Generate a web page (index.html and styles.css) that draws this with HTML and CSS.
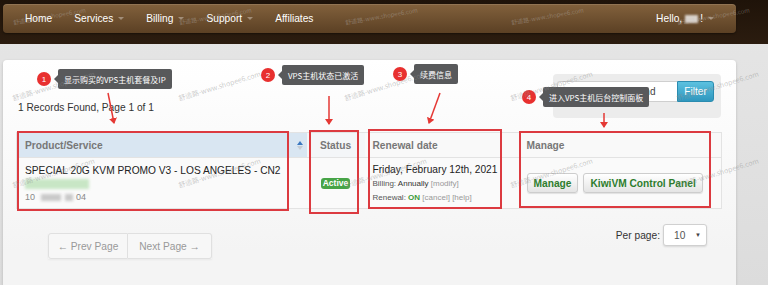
FILE: index.html
```html
<!DOCTYPE html>
<html lang="zh-CN">
<head>
<meta charset="utf-8">
<title>My Products &amp; Services</title>
<link rel="stylesheet" href="styles.css">
</head>
<body>
<header class="topbar">
  <nav class="navbar">
    <ul class="nav">
      <li class="nav-item">Home</li>
      <li class="nav-item">Services<span class="caret"></span></li>
      <li class="nav-item">Billing<span class="caret"></span></li>
      <li class="nav-item">Support<span class="caret"></span></li>
      <li class="nav-item">Affiliates</li>
    </ul>
    <div class="user">Hello, <span class="blur-name">xxx</span>!<span class="caret"></span></div>
  </nav>
</header>

<main class="wrap">
  <section class="panel">
    <div class="toolbar">
      <p class="count">1 Records Found, Page 1 of 1</p>
      <form class="filter">
        <input class="filter-input" type="text" placeholder="Enter Domain to Find">
        <button class="filter-btn" type="button">Filter</button>
      </form>
    </div>

    <table class="services">
      <thead>
        <tr>
          <th class="col-product">
            <div class="th-inner">
              <span>Product/Service</span>
              <span class="sort"><span class="sort-up"></span><span class="sort-down"></span></span>
            </div>
          </th>
          <th class="col-status">Status</th>
          <th class="col-renew">Renewal date</th>
          <th class="col-manage">Manage</th>
        </tr>
      </thead>
      <tbody>
        <tr>
          <td class="cell-product">
            <div class="line">SPECIAL 20G KVM PROMO V3 - LOS ANGELES - CN2</div>
            <div class="line"><span class="blob blob-green"></span></div>
            <div class="line ip">10<span class="blob blob-gray"></span><span class="blob blob-gray short"></span>04</div>
          </td>
          <td class="cell-status"><span class="label-active">Active</span></td>
          <td class="cell-renew">
            <div class="date">Friday, February 12th, 2021</div>
            <div class="small"><span class="muted">Billing:</span> Annually <span class="link">[modify]</span></div>
            <div class="small"><span class="muted">Renewal:</span> <span class="on">ON</span> <span class="link">[cancel]</span> <span class="link">[help]</span></div>
          </td>
          <td class="cell-manage">
            <div class="btns">
              <button class="btn" type="button">Manage</button>
              <button class="btn" type="button">KiwiVM Control Panel</button>
            </div>
          </td>
        </tr>
      </tbody>
    </table>

    <div class="footer">
      <div class="pager">
        <span class="page-btn prev">← Prev Page</span>
        <span class="page-btn next">Next Page →</span>
      </div>
      <div class="perpage">
        <span>Per page:</span>
        <span class="select"><span>10</span><span class="sel-arrow">▼</span></span>
      </div>
    </div>
  </section>
</main>

<div class="annotations">
  <div class="hl hl-1"></div>
  <div class="hl hl-2"></div>
  <div class="hl hl-3"></div>
  <div class="hl hl-4"></div>

  <svg class="arrows" width="768" height="285" viewBox="0 0 768 285">
    <defs>
      <marker id="ah" markerWidth="6" markerHeight="8" refX="5" refY="4" orient="auto" markerUnits="userSpaceOnUse">
        <path d="M0,0 L6,4 L0,8 Z" fill="#e53935"/>
      </marker>
    </defs>
    <line x1="108" y1="93" x2="114" y2="123" stroke="#e53935" stroke-width="1.5" marker-end="url(#ah)"/>
    <line x1="329" y1="96" x2="329" y2="124" stroke="#e53935" stroke-width="1.5" marker-end="url(#ah)"/>
    <line x1="440" y1="93" x2="429" y2="123" stroke="#e53935" stroke-width="1.5" marker-end="url(#ah)"/>
    <line x1="604" y1="113" x2="604" y2="127" stroke="#e53935" stroke-width="1.5" marker-end="url(#ah)"/>
  </svg>

  <div class="note note-1"><span class="num">1</span><span class="tip">显示购买的VPS主机套餐及IP</span></div>
  <div class="note note-2"><span class="num">2</span><span class="tip">VPS主机状态已激活</span></div>
  <div class="note note-3"><span class="num">3</span><span class="tip">续费信息</span></div>
  <div class="note note-4"><span class="num">4</span><span class="tip">进入VPS主机后台控制面板</span></div>
</div>

<div class="watermarks">
  <span class="wm wm-top">舒适路-www.shopee6.com</span><span class="wm wm-top">舒适路-www.shopee6.com</span><span class="wm wm-top">舒适路-www.shopee6.com</span><span class="wm wm-top">舒适路-www.shopee6.com</span><span class="wm wm-top">舒适路-www.shopee6.com</span>
  <span class="wm">舒适路-www.shopee6.com</span><span class="wm">舒适路-www.shopee6.com</span><span class="wm">舒适路-www.shopee6.com</span><span class="wm">舒适路-www.shopee6.com</span><span class="wm">舒适路-www.shopee6.com</span>
  <span class="wm">舒适路-www.shopee6.com</span><span class="wm">舒适路-www.shopee6.com</span><span class="wm">舒适路-www.shopee6.com</span><span class="wm">舒适路-www.shopee6.com</span><span class="wm">舒适路-www.shopee6.com</span>
</div>
</body>
</html>
```

FILE: styles.css
```css
* { box-sizing: border-box; }

html, body {
  margin: 0;
  height: 285px;
  overflow: hidden;
}

body {
  position: relative;
  background: linear-gradient(#e6e6e6, #dcdcdc);
  font-family: "Liberation Sans", Arial, "Noto Sans CJK SC", sans-serif;
  font-size: 10.2px;
  color: #333;
}

/* ---------- top navigation ---------- */
.topbar {
  height: 44px;
  padding: 4px 32px 0 3px;
  background: linear-gradient(#1f1309, #2b1c0f);
}

.navbar {
  height: 29px;
  border-radius: 4px;
  background: linear-gradient(#82613c, #5b4024);
  box-shadow: inset 0 1px 0 rgba(255, 255, 255, 0.12), 0 1px 2px rgba(0, 0, 0, 0.4);
  display: flex;
  align-items: center;
  justify-content: space-between;
  padding: 0 22px;
  color: #fff;
}

.nav {
  list-style: none;
  margin: 0;
  padding: 0;
  display: flex;
  gap: 22px;
}

.nav-item {
  display: flex;
  align-items: center;
}

.caret {
  display: inline-block;
  width: 0;
  height: 0;
  margin-left: 5px;
  border-left: 3px solid transparent;
  border-right: 3px solid transparent;
  border-top: 3px solid rgba(255, 255, 255, 0.35);
}

.user {
  display: flex;
  align-items: center;
}

.blur-name {
  display: inline-block;
  width: 13px;
  height: 8px;
  margin: 0 2px 0 3px;
  background: #d9d2cb;
  color: transparent;
  filter: blur(1px);
}

/* ---------- page ---------- */
.wrap {
  padding: 16px 32px 0 3px;
}

.panel {
  height: 225px;
  padding: 14px 15px 0 13px;
  border-radius: 4px 4px 0 0;
  background: linear-gradient(#ffffff, #f4f4f4 190px);
  box-shadow: 0 1px 3px rgba(0, 0, 0, 0.18);
}

.toolbar {
  height: 44px;
  margin-bottom: 14px;
  display: flex;
  justify-content: space-between;
  align-items: flex-end;
}

.count {
  margin: 0 0 4px 2px;
  line-height: 12px;
  color: #333;
}

.filter {
  width: 168px;
  height: 44px;
  margin: 0;
  padding: 7px 7px 0 4px;
  border-radius: 4px;
  background: #ececec;
  display: flex;
  align-items: flex-start;
}

.filter-input {
  width: 120px;
  height: 21px;
  margin: 0;
  padding: 0 3px;
  border: 1px solid #cfcfcf;
  border-right: none;
  border-radius: 3px 0 0 3px;
  background: #fff;
  font-family: "Liberation Sans", Arial, sans-serif;
  font-size: 10px;
  color: #444;
}

.filter-input::placeholder {
  color: #444;
}

.filter-btn {
  width: 37px;
  height: 21px;
  margin: 0;
  padding: 0;
  border: 1px solid #2b8cb0;
  border-radius: 0 3px 3px 0;
  background: linear-gradient(#5cc1e0, #2f97be);
  color: #fff;
  font-family: "Liberation Sans", Arial, sans-serif;
  font-size: 10.2px;
}

/* ---------- table ---------- */
.services {
  width: 705px;
  border-collapse: collapse;
  border: 1px solid #e3e3e3;
  table-layout: fixed;
}

.services th {
  height: 25px;
  padding: 0 8px;
  text-align: left;
  font-weight: bold;
  color: #777;
  background: #f9f9f9;
}

.services th.col-product { width: 290px; background: #d9e6f2; padding-right: 4px; }
.services th.col-status  { width: 58px; text-align: center; background: #f4f6f8; padding: 0; }
.services th.col-renew   { width: 154px; }
.services th.col-manage  { width: 203px; }

.th-inner {
  display: flex;
  justify-content: space-between;
  align-items: center;
}

.sort {
  display: flex;
  flex-direction: column;
  gap: 1px;
}

.sort-up {
  width: 0;
  height: 0;
  border-left: 3px solid transparent;
  border-right: 3px solid transparent;
  border-bottom: 4px solid #3b78c0;
}

.sort-down {
  width: 0;
  height: 0;
  border-left: 3px solid transparent;
  border-right: 3px solid transparent;
  border-top: 4px solid #c5ccd4;
}

.services td {
  height: 51px;
  padding: 0 8px;
  border-top: 1px solid #e3e3e3;
  background: #fafafa;
  vertical-align: middle;
}

.services td.cell-product {
  vertical-align: top;
  padding-top: 6px;
  line-height: 13.5px;
  color: #222;
}

.line {
  height: 13.5px;
  display: flex;
  align-items: center;
}

.blob {
  display: inline-block;
  filter: blur(1.5px);
}

.blob-green {
  width: 64px;
  height: 10px;
  background: #c8e6c5;
}

.blob-gray {
  width: 20px;
  height: 7px;
  margin-left: 6px;
  background: #c9c9c9;
}

.blob-gray.short {
  width: 8px;
  margin: 0 3px 0 4px;
}

.ip {
  color: #888;
  font-size: 9px;
}

.services td.cell-status {
  padding: 0;
  text-align: center;
}

.label-active {
  display: inline-block;
  padding: 1px 2px;
  border-radius: 3px;
  background: #47a447;
  color: #fff;
  font-weight: bold;
  font-size: 8.5px;
  line-height: 9px;
}

.services td.cell-renew {
  vertical-align: top;
  padding-top: 5px;
  line-height: 14px;
}

.date {
  color: #222;
}

.small {
  font-size: 8px;
  color: #333;
}

.muted { color: #555; }
.link  { color: #999; }
.on    { color: #3c9a3c; font-weight: bold; }

.btns {
  display: flex;
  gap: 5px;
}

.btn {
  height: 20px;
  margin: 0;
  padding: 0 6px;
  border: 1px solid #cdcdcd;
  border-radius: 3px;
  background: linear-gradient(#ffffff, #e4e4e4);
  box-shadow: 0 1px 1px rgba(0, 0, 0, 0.1);
  color: #2d7d2d;
  font-family: "Liberation Sans", Arial, sans-serif;
  font-size: 10.2px;
  font-weight: bold;
}

/* ---------- footer ---------- */
.footer {
  margin-top: 15px;
  display: flex;
  justify-content: space-between;
  align-items: flex-start;
}

.pager {
  margin: 9px 0 0 32px;
  display: flex;
  box-shadow: 0 1px 2px rgba(0, 0, 0, 0.05);
}

.page-btn {
  height: 26px;
  display: flex;
  align-items: center;
  justify-content: center;
  border: 1px solid #e0e0e0;
  background: #f7f7f7;
  color: #999;
}

.prev {
  width: 80px;
  border-radius: 3px 0 0 3px;
}

.next {
  width: 84px;
  border-left: none;
  border-radius: 0 3px 3px 0;
}

.perpage {
  margin-right: 14px;
  display: flex;
  align-items: center;
  gap: 3px;
  color: #333;
}

.select {
  width: 44px;
  height: 22px;
  padding: 0 5px 0 10px;
  display: flex;
  align-items: center;
  justify-content: space-between;
  border: 1px solid #d0d0d0;
  border-radius: 3px;
  background: #fff;
  box-shadow: 0 1px 2px rgba(0, 0, 0, 0.12);
  color: #555;
}

.sel-arrow {
  font-size: 6px;
  color: #444;
}

/* ---------- annotation overlay ---------- */
.annotations {
  position: absolute;
  inset: 0;
  pointer-events: none;
}

.arrows {
  position: absolute;
  left: 0;
  top: 0;
}

.hl {
  position: absolute;
  border: 2px solid #dc3a40;
}

.hl-1 { left: 17px;  top: 131px; width: 272px; height: 80px; }
.hl-2 { left: 309px; top: 130px; width: 50px;  height: 84px; }
.hl-3 { left: 368px; top: 129px; width: 134px; height: 80px; }
.hl-4 { left: 519px; top: 131px; width: 192px; height: 77px; }

.note {
  position: absolute;
  display: flex;
  align-items: center;
  gap: 7px;
  font-family: "Noto Sans CJK SC", sans-serif;
}

.note-1 { left: 37px;  top: 69px; }
.note-2 { left: 261px; top: 65px; }
.note-3 { left: 393px; top: 64px; }
.note-4 { left: 522px; top: 87px; }

.num {
  width: 14px;
  height: 14px;
  border-radius: 50%;
  background: #e8302f;
  color: #fff;
  font-family: "Liberation Sans", Arial, sans-serif;
  font-size: 8px;
  display: flex;
  align-items: center;
  justify-content: center;
}

.tip {
  position: relative;
  height: 20px;
  padding: 0 6px;
  display: flex;
  align-items: center;
  border-radius: 2px;
  background: #58595b;
  color: #fff;
  font-size: 8px;
  white-space: nowrap;
}

.tip::before {
  content: "";
  position: absolute;
  left: -4px;
  top: 6px;
  border-top: 4px solid transparent;
  border-bottom: 4px solid transparent;
  border-right: 4px solid #58595b;
}

/* ---------- watermarks ---------- */
.watermarks {
  position: absolute;
  left: 14px;
  top: 0;
  display: grid;
  grid-template-columns: repeat(4, 166px) 90px;
  grid-template-rows: 27px 76px 87px;
  pointer-events: none;
}

.wm {
  display: block;
  align-self: end;
  line-height: 9px;
  transform: rotate(-17deg);
  transform-origin: left bottom;
  font-family: "Noto Sans CJK SC", sans-serif;
  font-size: 7px;
  color: rgba(140, 140, 140, 0.45);
  white-space: nowrap;
}

.wm.wm-top {
  font-size: 6px;
  transform: rotate(-10deg);
  color: rgba(200, 200, 200, 0.35);
}
```
